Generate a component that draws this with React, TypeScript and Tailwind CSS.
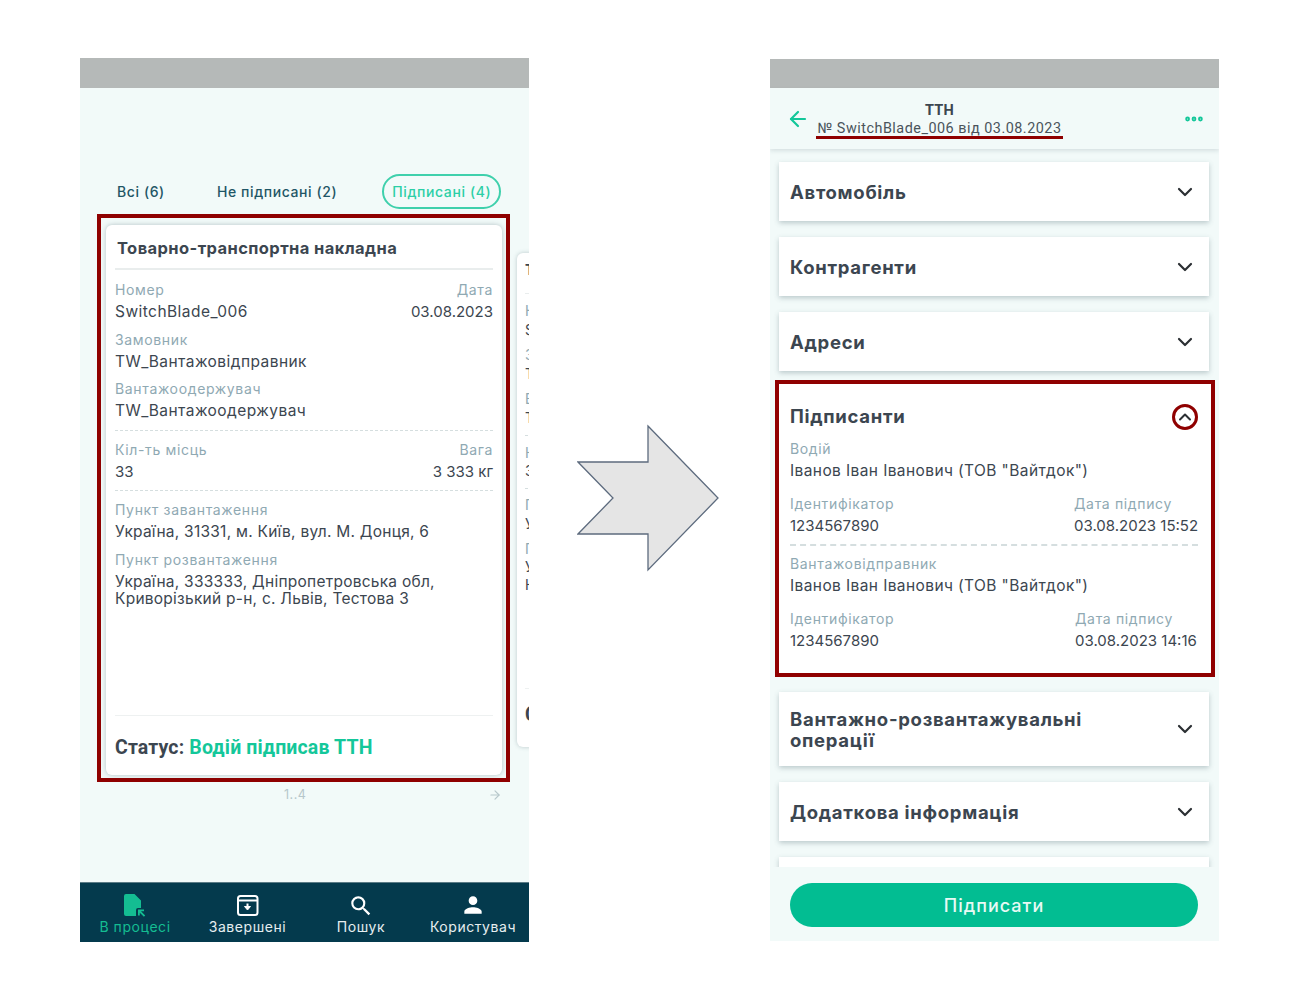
import { ChevronDown, ChevronUp, ArrowLeft, ArrowRight, MoreHorizontal } from "lucide-react"

const inter = "font-['Inter','Noto_Sans',sans-serif]"
const roboto = "font-['Roboto','Liberation_Sans',sans-serif]"

function Field({ label, value, right, num }: { label: string; value: string; right?: boolean; num?: boolean }): React.ReactNode {
	return (
		<div className={`whitespace-nowrap ${right ? "text-right" : ""}`}>
			<div className="text-[14px] leading-[20px] tracking-[0.65px] text-[#8fa9b3]">{label}</div>
			<div className={`leading-[24px] -mb-[2px] text-[#3c4650] ${num ? "text-[15px]" : "text-[15.5px] tracking-[0.45px]"}`}>{value}</div>
		</div>
	)
}

function TabLabel({ children, active }: { children: React.ReactNode; active?: boolean }): React.ReactNode {
	if (active) {
		return (
			<div className="h-[35px] w-[119px] rounded-full border-2 border-[#3fd0ac] flex items-center justify-center text-[14px] tracking-[0.6px] font-medium text-[#2ccfa6] bg-[#f2faf9]">
				{children}
			</div>
		)
	}
	return <div className="text-[14px] tracking-[0.6px] font-medium text-[#1f5666]">{children}</div>
}

function TtnCard(): React.ReactNode {
	return (
		<div className="h-[550px] w-[396px] rounded-[6px] bg-white shadow-[0_0_5px_rgba(60,90,100,0.35)] px-[9px] flex flex-col">
			<div className="h-[45px] flex items-center px-[2px] pt-[4px] border-b-2 border-[#e9eded] text-[16.5px] tracking-[0.4px] font-bold text-[#3c4650]">
				Товарно-транспортна накладна
			</div>
			<div className="flex justify-between pt-[10px]">
				<Field label="Номер" value="SwitchBlade_006" />
				<Field label="Дата" value="03.08.2023" right num />
			</div>
			<div className="pt-[8px]">
				<Field label="Замовник" value="TW_Вантажовідправник" />
			</div>
			<div className="pt-[7px] pb-[9px] border-b border-dashed border-[#d5dedf]">
				<Field label="Вантажоодержувач" value="TW_Вантажоодержувач" />
			</div>
			<div className="flex justify-between pt-[9px] pb-[8px] border-b border-dashed border-[#d5dedf]">
				<Field label="Кіл-ть місць" value="33" num />
				<Field label="Вага" value="3 333 кг" right num />
			</div>
			<div className="pt-[9px]">
				<div className="text-[14px] leading-[20px] tracking-[0.65px] text-[#8fa9b3]">Пункт завантаження</div>
				<div className="text-[15.5px] leading-[24px] -mb-[2px] tracking-[0.25px] text-[#3c4650]">Україна, 31331, м. Київ, вул. М. Донця, 6</div>
			</div>
			<div className="pt-[8px]">
				<div className="text-[14px] leading-[20px] tracking-[0.65px] text-[#8fa9b3]">Пункт розвантаження</div>
				<div className="text-[15.5px] leading-[17px] pt-[3px] tracking-[0.25px] text-[#3c4650]">
					Україна, 333333, Дніпропетровська обл,
					<br />
					Криворізький р-н, с. Львів, Тестова 3
				</div>
			</div>
			<div className="mt-auto h-[60px] border-t border-[#eef1f1] flex items-center pt-[5px]">
				<span className={`${roboto} text-[19.5px] tracking-[0.15px] font-bold text-[#3c4650]`}>Статус:&nbsp;</span>
				<span className={`${roboto} text-[19.5px] tracking-[0.15px] font-bold text-[#14c79a]`}>Водій підписав ТТН</span>
			</div>
		</div>
	)
}

function PeekCard(): React.ReactNode {
	return (
		<div className="h-[494px] w-[40px] shrink-0 ml-[7px] mt-[39px] rounded-[6px] bg-white shadow-[0_0_4px_rgba(60,90,100,0.3)] pl-[8px] overflow-hidden text-[14px] text-[#3c4650] leading-[18px]">
			<div className="pt-[8px] h-[32px] font-bold">Т</div>
			<div className="mt-[8px] border-t border-[#e9eded]" />
			<div className="pt-[8px] text-[#8fa9b3]">Н</div>
			<div className="pt-[1px]">S</div>
			<div className="pt-[7px] text-[#8fa9b3]">З</div>
			<div className="pt-[1px]">Т</div>
			<div className="pt-[7px] text-[#8fa9b3]">В</div>
			<div className="pt-[1px] pb-[8px] border-b border-dashed border-[#d5dedf]">Т</div>
			<div className="pt-[8px] text-[#8fa9b3]">К</div>
			<div className="pb-[8px] border-b border-dashed border-[#d5dedf]">3</div>
			<div className="pt-[7px] text-[#8fa9b3]">П</div>
			<div className="pt-[1px]">У</div>
			<div className="pt-[7px] text-[#8fa9b3]">П</div>
			<div>У</div>
			<div>К</div>
			<div className="mt-[94px] border-t border-[#eef1f1]" />
			<div className={`${roboto} pt-[17px] text-[19.5px] font-bold`}>С</div>
		</div>
	)
}

function FileIcon(): React.ReactNode {
	return (
		<svg width="22" height="23" viewBox="0 0 22 23" className="text-[#14bd92]" fill="currentColor">
			<path d="M2 0h8.5l6.5 6.5V14h-3a2 2 0 0 0-2 2v6H2a2 2 0 0 1-2-2V2a2 2 0 0 1 2-2z" />
			<path d="M14 15.5h6v1.8h-3l4.2 4.2-1.3 1.3-4.1-4.1v2.8H14z" />
		</svg>
	)
}

function ArchiveIcon(): React.ReactNode {
	return (
		<svg width="22" height="21" viewBox="0 0 22 21" fill="none" stroke="white" strokeWidth="2" className="mb-[1px]">
			<rect x="1" y="1" width="19.5" height="19" rx="2.5" />
			<path d="M1 5.5h19.5" />
			<path d="M7.5 11.5h6l-3 3.5z" fill="white" strokeWidth="1" />
			<path d="M10.5 8.5v4" />
		</svg>
	)
}

function SearchIcon(): React.ReactNode {
	return (
		<svg width="26" height="26" viewBox="0 0 24 24" fill="white" className="-mb-[2px]">
			<path d="M15.5 14h-.79l-.28-.27A6.471 6.471 0 0 0 16 9.5 6.5 6.5 0 1 0 9.5 16c1.61 0 3.09-.59 4.23-1.57l.27.28v.79l5 4.99L20.49 19l-4.99-5zm-6 0C7.01 14 5 11.99 5 9.5S7.01 5 9.5 5 14 7.01 14 9.5 11.99 14 9.5 14z" />
		</svg>
	)
}

function PersonIcon(): React.ReactNode {
	return (
		<svg width="26" height="26" viewBox="0 0 24 24" fill="white" className="-mb-[1px]">
			<path d="M12 12c2.21 0 4-1.79 4-4s-1.79-4-4-4-4 1.79-4 4 1.79 4 4 4zm0 2c-2.67 0-8 1.34-8 4v2h16v-2c0-2.66-5.33-4-8-4z" />
		</svg>
	)
}

function NavItem({ icon, label, active, width }: { icon: React.ReactNode; label: string; active?: boolean; width: string }): React.ReactNode {
	return (
		<div className={`${width} flex flex-col items-center`}>
			<div className="h-[28px] flex items-end justify-center">{icon}</div>
			<div className={`text-[14px] leading-[20px] tracking-[0.55px] whitespace-nowrap ${active ? "text-[#14bd92]" : "text-[#e6eef0]"}`}>{label}</div>
		</div>
	)
}

function AccordionRow({ title, height = "h-[59px]" }: { title: React.ReactNode; height?: string }): React.ReactNode {
	return (
		<div className={`${height} shrink-0 ml-[9px] mr-[10px] bg-white shadow-[0_2px_5px_rgba(60,90,100,0.3)] flex items-center justify-between pl-[11px] pr-[12px]`}>
			<div className="pt-[1px] text-[18.5px] leading-[21px] tracking-[0.7px] font-bold text-[#3c4650]">{title}</div>
			<ChevronDown size={24} strokeWidth={2.2} className="text-[#2b2f33] shrink-0" />
		</div>
	)
}

function SignerBlock({ role, date, dateWidth }: { role: string; date: string; dateWidth: string }): React.ReactNode {
	return (
		<div>
			<div className="text-[14px] leading-[20px] tracking-[0.65px] text-[#8fa9b3]">{role}</div>
			<div className="text-[15.5px] leading-[24px] -mb-[2px] tracking-[0.4px] text-[#3c4650]">Іванов Іван Іванович (ТОВ "Вайтдок")</div>
			<div className="flex justify-between pt-[13px] pr-[1px]">
				<Field label="Ідентифікатор" value="1234567890" num />
				<div className={dateWidth}>
					<Field label="Дата підпису" value={date} num />
				</div>
			</div>
		</div>
	)
}

export default function App(): React.ReactNode {
	return (
		<div className={`${inter} w-[1300px] h-[1000px] bg-white flex items-start pl-[80px] overflow-hidden`}>
			{/* left phone */}
			<div className="mt-[58px] w-[449px] h-[884px] bg-[#f2faf9] flex flex-col overflow-hidden shrink-0">
				<div className="h-[30px] bg-[#b5b9b8] shrink-0" />
				<div className="mt-[86px] h-[35px] flex items-center pl-[37px] shrink-0">
					<TabLabel>Всі (6)</TabLabel>
					<div className="ml-[52px]">
						<TabLabel>Не підписані (2)</TabLabel>
					</div>
					<div className="ml-[45px]">
						<TabLabel active>Підписані (4)</TabLabel>
					</div>
				</div>
				<div className="flex items-start mt-[5px] ml-[17px] shrink-0">
					<div className="w-[413px] h-[568px] shrink-0 border-[4px] border-[#8f0000] pl-[5px] pt-[7px]">
						<TtnCard />
					</div>
					<PeekCard />
				</div>
				<div className="h-[27px] shrink-0 flex items-center text-[12.5px] tracking-[0.5px] text-[#b6c7cb] pl-[204px]">
					1..4
					<ArrowRight size={14} className="ml-auto mr-[27px] -mt-[2px] text-[#b6c7cb]" />
				</div>
				<div className="mt-auto h-[60px] bg-[#043a4d] border-t border-[#5b7b86] flex items-center">
					<NavItem width="w-[110px]" active label="В процесі" icon={<FileIcon />} />
					<NavItem width="w-[115px]" label="Завершені" icon={<ArchiveIcon />} />
					<NavItem width="w-[112px]" label="Пошук" icon={<SearchIcon />} />
					<NavItem width="w-[112px]" label="Користувач" icon={<PersonIcon />} />
				</div>
			</div>

			{/* arrow */}
			<svg width="142" height="148" viewBox="0 0 142 148" className="mt-[424px] ml-[48px] shrink-0">
				<path d="M71 2 141 74 71 146V110H1L36 74 1 38H71Z" fill="#e5e5e5" stroke="#5d6b7e" strokeWidth="1.3" />
			</svg>

			{/* right phone */}
			<div className="mt-[59px] ml-[51px] w-[449px] h-[882px] bg-[#f2faf9] flex flex-col overflow-hidden shrink-0">
				<div className="h-[29px] bg-[#b5b9b8] shrink-0" />
				<div className="h-[61px] shrink-0 flex items-center shadow-[0_2px_4px_rgba(60,90,100,0.15)]">
					<ArrowLeft size={24} strokeWidth={2.2} className="ml-[16px] text-[#14c79a] shrink-0" />
					<div className="ml-[6px] w-[247px] text-center pt-[3px]">
						<div className={`${roboto} text-[14.5px] leading-[18px] font-bold tracking-[0.3px] text-[#3c4650]`}>ТТН</div>
						<div className={`${roboto} text-[14.4px] leading-[14px] pt-[2px] tracking-[0.5px] text-[#4a545c] border-b-[3px] border-[#8f0000] whitespace-nowrap`}>№ SwitchBlade_006 від 03.08.2023</div>
					</div>
					<MoreHorizontal size={22} strokeWidth={3.2} className="ml-auto mr-[14px] text-[#14c79a]" />
				</div>
				<div className="flex-1 overflow-hidden flex flex-col pt-[13px] gap-[16px]">
					<AccordionRow title="Автомобіль" />
					<AccordionRow title="Контрагенти" />
					<AccordionRow title="Адреси" />
					<div className="ml-[5px] mr-[4px] -mt-[7px] -mb-[1px] h-[297px] shrink-0 border-[4px] border-[#8f0000] bg-white pl-[11px] pr-[13px]">
						<div className="h-[55px] pt-[10px] flex items-center justify-between text-[18.5px] tracking-[0.7px] font-bold text-[#3c4650]">
							Підписанти
							<div className="w-[26px] h-[26px] rounded-full border-[3px] border-[#8f0000] flex items-center justify-center">
								<ChevronUp size={20} strokeWidth={2.4} className="text-[#2b2f33]" />
							</div>
						</div>
						<div className="pb-[8px] border-b-2 border-dashed border-[#d5dedf]">
							<SignerBlock role="Водій" date="03.08.2023 15:52" dateWidth="w-[123px]" />
						</div>
						<div className="pt-[8px]">
							<SignerBlock role="Вантажовідправник" date="03.08.2023 14:16" dateWidth="w-[122px]" />
						</div>
					</div>
					<AccordionRow title={<>Вантажно-розвантажувальні<br />операції</>} height="h-[74px]" />
					<AccordionRow title="Додаткова інформація" />
					<div className="h-[59px] shrink-0 ml-[9px] mr-[10px] bg-white shadow-[0_2px_5px_rgba(60,90,100,0.3)]" />
				</div>
				<div className="h-[74px] shrink-0 bg-[#f2faf9] pt-[16px] pl-[20px] pr-[21px]">
					<div className="h-[44px] rounded-full bg-[#02bd92] flex items-center justify-center text-[18px] tracking-[1px] font-medium text-[#e8faf5]">
						Підписати
					</div>
				</div>
			</div>
		</div>
	)
}
